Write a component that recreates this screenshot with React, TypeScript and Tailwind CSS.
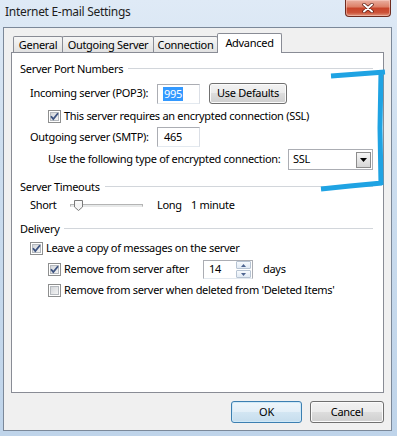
import React from "react";

function CheckBox({ checked }: { checked?: boolean }) {
  return (
    <span className="relative flex h-[13px] w-[13px] shrink-0 items-center justify-center border border-[#8e8f8f] bg-white">
      <span className="h-[9px] w-[9px] border border-[#b5b9be] bg-[linear-gradient(135deg,#d3d6da_0%,#f4f4f4_100%)]" />
      {checked && (
        <svg className="absolute left-0 top-0" width="11" height="11" viewBox="0 0 11 11">
          <path d="M2 5.2 L4.3 8 L9 2.2" fill="none" stroke="#3d5381" strokeWidth="1.8" />
        </svg>
      )}
    </span>
  );
}

function Heading({ label }: { label: string }) {
  return (
    <div className="flex h-[14px] items-center">
      <span className="leading-none">{label}</span>
      <span className="ml-[5px] h-px flex-1 bg-[#d2d6db]" />
    </div>
  );
}

const btn =
  "flex items-center justify-center rounded-[3px] border border-[#707070] bg-[linear-gradient(to_bottom,#f2f2f2_0%,#ebebeb_50%,#dddddd_50%,#cfcfcf_100%)] shadow-[inset_0_0_0_1px_#fbfbfb] text-[11px] tracking-[-0.3px]";

function CloseButton() {
  return (
    <div className="mr-[6px] flex h-[17px] w-[46px] items-center justify-center rounded-b-[4px] border border-t-0 border-[#6e2b1f] bg-[linear-gradient(to_bottom,#eab0a2_0%,#dd8169_42%,#c8452b_52%,#cc5238_78%,#e0967e_100%)] shadow-[inset_0_0_0_1px_rgba(255,220,210,0.45)]">
      <svg width="12" height="10" viewBox="0 0 12 10">
        <path d="M2 1.5 L10 8.5 M10 1.5 L2 8.5" stroke="#5a1a10" strokeWidth="3.4" strokeLinecap="round" />
        <path d="M2 1.5 L10 8.5 M10 1.5 L2 8.5" stroke="#ffffff" strokeWidth="2" strokeLinecap="round" />
      </svg>
    </div>
  );
}

function Tab({ label, active, className }: { label: string; active?: boolean; className: string }) {
  return (
    <div
      className={
        active
          ? `relative z-10 flex h-[20px] items-start justify-center rounded-t-[2px] border border-b-0 border-[#898c95] bg-white pt-[1px] ${className}`
          : `mb-px flex h-[16px] items-center justify-center rounded-t-[2px] border border-b-0 border-[#898c95] bg-[linear-gradient(to_bottom,#f6f6f6_0%,#ececec_50%,#e1e1e1_100%)] ${className}`
      }
    >
      <span className="leading-[16px]">{label}</span>
    </div>
  );
}

export default function App() {
  return (
    <div className="relative h-[436px] w-[397px] overflow-hidden whitespace-nowrap bg-[linear-gradient(to_bottom,#dfeaf6_0%,#cddeef_35%,#bfd4ea_100%)] font-['Noto_Sans',sans-serif] text-[11px] tracking-[-0.3px] text-black">
      {/* title bar */}
      <div className="flex h-[27px] items-start justify-between">
        <div className="pl-[5px] pt-[3px] text-[12px] leading-[18px] text-[#1e1e1e]">
          Internet E-mail Settings
        </div>
        <CloseButton />
      </div>

      {/* client area */}
      <div className="ml-[3px] mr-[5px] flex h-[404px] flex-col border border-[#7b8899] bg-[#f0f0f0] px-[7px] pt-[5px]">
        <div className="relative z-10 -mb-px flex h-[20px] items-end pl-[2px]">
          <Tab label="General" className="w-[50px]" />
          <Tab label="Outgoing Server" className="-ml-px w-[92px]" />
          <Tab label="Connection" className="-ml-px w-[65px]" />
          <Tab label="Advanced" active className="-ml-px w-[65px]" />
        </div>

        <div className="flex h-[341px] flex-col border border-[#898c95] bg-white pl-[8px] pr-[10px]">
          <div className="mt-[8px]">
            <Heading label="Server Port Numbers" />
          </div>

          <div className="mt-[8px] flex h-[21px] items-center pl-[10px]">
            <span className="w-[127px]">Incoming server (POP3):</span>
            <div className="flex h-[20px] w-[43px] items-center border border-[#abadb3] border-b-[#e3e9ef] border-r-[#dbdfe6] bg-white pl-[5px]">
              <span className="bg-[#3399ff] px-px leading-[14px] text-white">995</span>
            </div>
            <button className={`${btn} ml-[9px] h-[21px] w-[78px]`}>Use Defaults</button>
          </div>

          <div className="mt-[3px] flex h-[19px] items-center pl-[28px]">
            <CheckBox checked />
            <span className="ml-[3px]">This server requires an encrypted connection (SSL)</span>
          </div>

          <div className="mt-px flex h-[20px] items-center pl-[10px]">
            <span className="w-[127px]">Outgoing server (SMTP):</span>
            <div className="flex h-[20px] w-[43px] items-center border border-[#abadb3] border-b-[#e3e9ef] border-r-[#dbdfe6] bg-white pl-[6px]">
              465
            </div>
          </div>

          <div className="mt-[2px] flex h-[21px] items-center pl-[28px]">
            <span className="w-[240px]">Use the following type of encrypted connection:</span>
            <div className="flex h-[21px] w-[85px] items-center justify-between border border-[#abadb3] bg-white pl-[4px] pr-[1px]">
              <span>SSL</span>
              <div className="flex h-[16px] w-[15px] items-center justify-center border border-[#8c8c8c] bg-[linear-gradient(to_bottom,#f6f6f6_0%,#e6e6e6_50%,#d6d6d6_100%)]">
                <svg width="7" height="4" viewBox="0 0 7 4">
                  <path d="M0 0 H7 L3.5 4 Z" fill="#000" />
                </svg>
              </div>
            </div>
          </div>

          <div className="mt-[9px]">
            <Heading label="Server Timeouts" />
          </div>

          <div className="mt-[3px] flex h-[19px] items-center pl-[10px]">
            <span className="w-[40px]">Short</span>
            <div className="relative flex h-full w-[73px] items-center">
              <div className="h-[3px] w-full border border-[#b4b4b4] border-b-[#e8e8e8] bg-[#e7eaea]" />
              <svg className="absolute left-[4px] top-[4px]" width="9" height="11" viewBox="0 0 9 11">
                <path d="M0.5 0.5 H8.5 V7 L4.5 10.5 L0.5 7 Z" fill="#f4f4f4" stroke="#7a7a7a" />
                <path d="M2 2 H7" stroke="#ffffff" />
              </svg>
            </div>
            <span className="ml-[14px] w-[34px]">Long</span>
            <span>1 minute</span>
          </div>

          <div className="mt-[6px]">
            <Heading label="Delivery" />
          </div>

          <div className="mt-[4px] flex h-[19px] items-center pl-[10px]">
            <CheckBox checked />
            <span className="ml-[3px]">Leave a copy of messages on the server</span>
          </div>

          <div className="mt-px flex h-[21px] items-center pl-[28px]">
            <CheckBox checked />
            <span className="ml-[3px] w-[139px]">Remove from server after</span>
            <div className="flex h-[19px] w-[50px] items-center justify-between border border-[#abadb3] border-b-[#e3e9ef] bg-white pl-[5px] pr-px">
              <span>14</span>
              <div className="flex h-full w-[15px] flex-col justify-center gap-px">
                <div className="flex h-[8px] items-center justify-center rounded-[1px] border border-[#b7c4d3] bg-[linear-gradient(to_bottom,#f7fafd_0%,#e1eaf4_100%)]">
                  <svg width="5" height="3" viewBox="0 0 5 3">
                    <path d="M0 3 L2.5 0 L5 3 Z" fill="#4e6590" />
                  </svg>
                </div>
                <div className="flex h-[8px] items-center justify-center rounded-[1px] border border-[#b7c4d3] bg-[linear-gradient(to_bottom,#f7fafd_0%,#e1eaf4_100%)]">
                  <svg width="5" height="3" viewBox="0 0 5 3">
                    <path d="M0 0 L5 0 L2.5 3 Z" fill="#4e6590" />
                  </svg>
                </div>
              </div>
            </div>
            <span className="ml-[10px]">days</span>
          </div>

          <div className="mt-px flex h-[19px] items-center pl-[28px]">
            <CheckBox />
            <span className="ml-[3px]">Remove from server when deleted from 'Deleted Items'</span>
          </div>
        </div>

        <div className="mt-[8px] flex justify-end gap-[8px]">
          <button className="flex h-[22px] w-[71px] items-center justify-center rounded-[3px] border border-[#3c7fb1] bg-[linear-gradient(to_bottom,#eef6fb_0%,#e3eff8_50%,#d3e6f3_50%,#c6dded_100%)] shadow-[inset_0_0_0_1px_#cfe9f8] text-[11px] tracking-[-0.3px]">
            OK
          </button>
          <button className={`${btn} h-[22px] w-[74px]`}>Cancel</button>
        </div>
      </div>

      {/* hand-drawn marker annotation */}
      <svg className="pointer-events-none absolute left-0 top-0" width="397" height="436" viewBox="0 0 397 436">
        <path
          d="M331 76 L358 74 L385 72 M381 72 L380 128 L381 185 M382 183 L350 186 L321 189"
          fill="none"
          stroke="#1fa3e3"
          strokeWidth="5"
          strokeLinejoin="round"
        />
      </svg>
    </div>
  );
}
